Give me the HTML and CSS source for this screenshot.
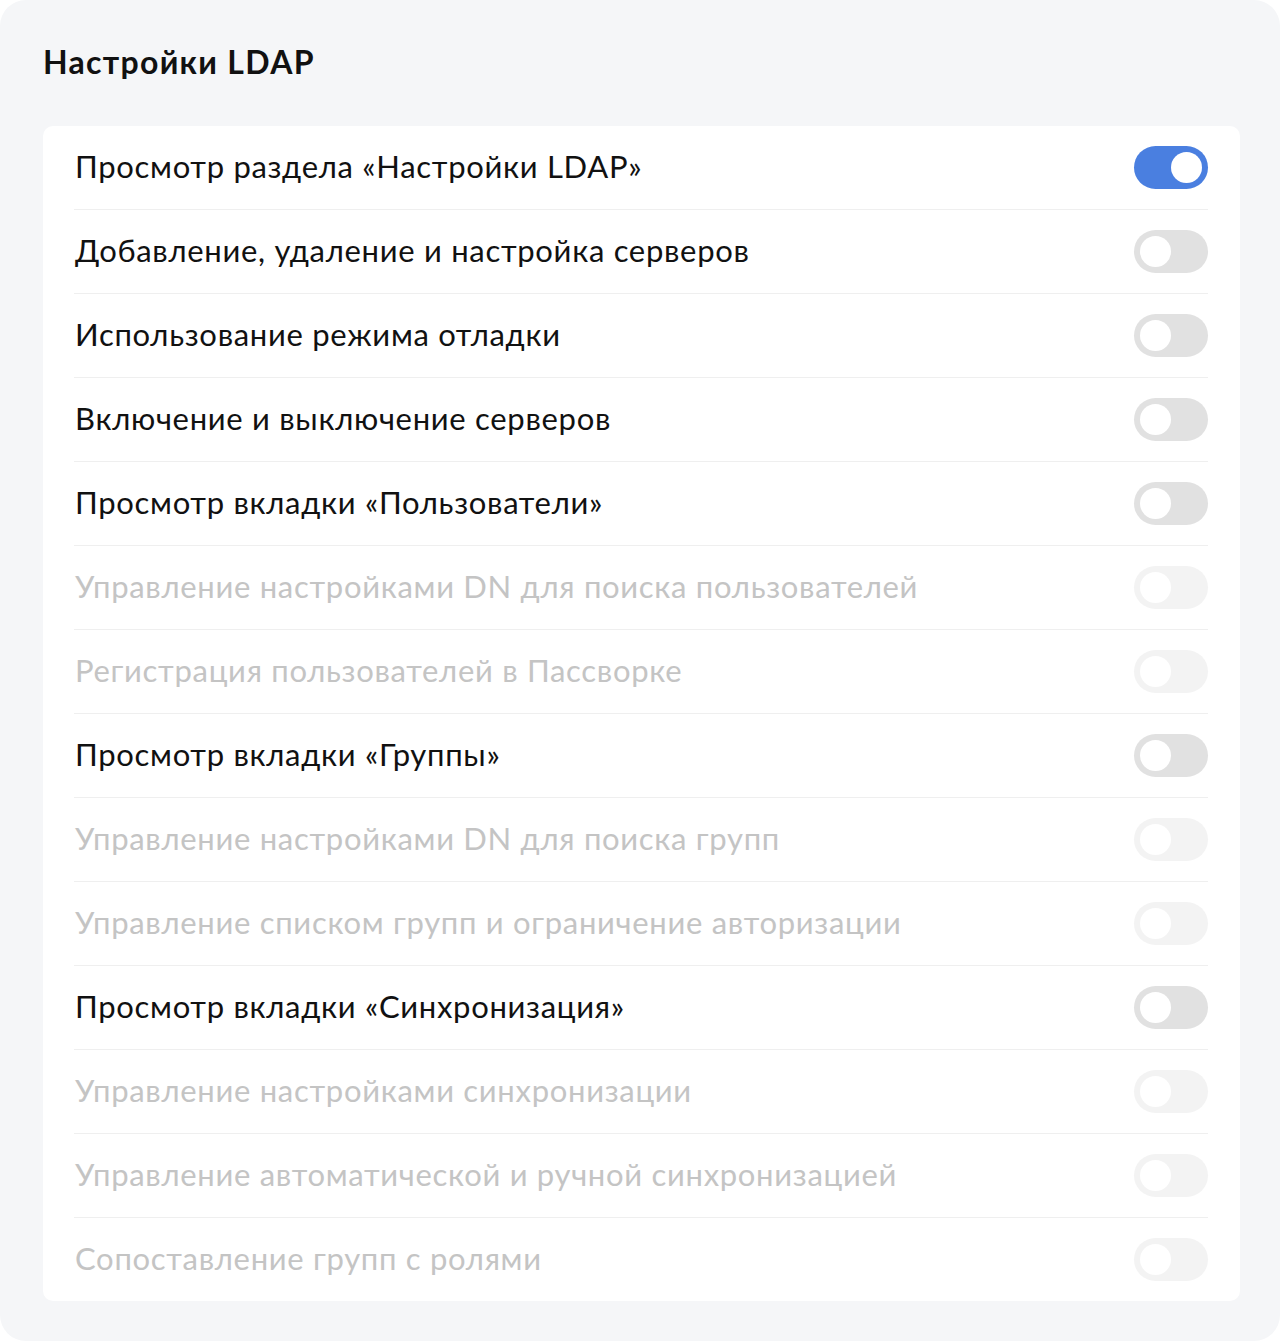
FILE: index.html
```html
<!DOCTYPE html>
<html lang="ru">
<head>
  <meta charset="UTF-8" />
  <meta name="viewport" content="width=device-width, initial-scale=1.0"/>
  <title>Настройки LDAP</title>
  <link rel="stylesheet" href="styles.css">
</head>
<body>

  <div class="panel">
    <h1>Настройки LDAP</h1>

    <div class="card">
      <div class="row">
        <span class="label">Просмотр раздела «Настройки LDAP»</span>
        <span class="toggle on"></span>
      </div>
      <div class="row">
        <span class="label">Добавление, удаление и настройка серверов</span>
        <span class="toggle"></span>
      </div>
      <div class="row">
        <span class="label">Использование режима отладки</span>
        <span class="toggle"></span>
      </div>
      <div class="row">
        <span class="label">Включение и выключение серверов</span>
        <span class="toggle"></span>
      </div>
      <div class="row">
        <span class="label">Просмотр вкладки «Пользователи»</span>
        <span class="toggle"></span>
      </div>
      <div class="row disabled">
        <span class="label">Управление настройками DN для поиска пользователей</span>
        <span class="toggle"></span>
      </div>
      <div class="row disabled">
        <span class="label">Регистрация пользователей в Пассворке</span>
        <span class="toggle"></span>
      </div>
      <div class="row">
        <span class="label">Просмотр вкладки «Группы»</span>
        <span class="toggle"></span>
      </div>
      <div class="row disabled">
        <span class="label">Управление настройками DN для поиска групп</span>
        <span class="toggle"></span>
      </div>
      <div class="row disabled">
        <span class="label">Управление списком групп и ограничение авторизации</span>
        <span class="toggle"></span>
      </div>
      <div class="row">
        <span class="label">Просмотр вкладки «Синхронизация»</span>
        <span class="toggle"></span>
      </div>
      <div class="row disabled">
        <span class="label">Управление настройками синхронизации</span>
        <span class="toggle"></span>
      </div>
      <div class="row disabled">
        <span class="label">Управление автоматической и ручной синхронизацией</span>
        <span class="toggle"></span>
      </div>
      <div class="row disabled">
        <span class="label">Сопоставление групп с ролями</span>
        <span class="toggle"></span>
      </div>
    </div>
  </div>

</body>
</html>
```

FILE: styles.css
```css
body {
  margin: 0;
  font-family: Lato, 'Noto Sans', sans-serif;
  background: white;
}

.panel {
  background: #f5f6f8;
  border-radius: 26px;
  height: 1341px;
  box-sizing: border-box;
  padding: 38px 40px 0 43px;
}

.panel h1 {
  margin: 0 0 40px;
  font-size: 32px;
  font-weight: 700;
  letter-spacing: 1.3px;
  color: #111;
  line-height: 48px;
}

.card {
  background: white;
  border-radius: 10px;
  padding: 0 32px 0 31px;
}

.row {
  display: flex;
  align-items: center;
  justify-content: space-between;
  height: 84px;
  border-bottom: 1px solid #efefef;
  box-sizing: border-box;
}

.row:last-child {
  border-bottom: none;
  height: 83px;
}

.label {
  font-size: 31px;
  letter-spacing: 0.7px;
  color: #111;
  padding: 0 0 4px 1px;
}

.toggle {
  position: relative;
  width: 74px;
  height: 43px;
  border-radius: 22px;
  background: #e1e1e1;
  flex-shrink: 0;
}

.toggle::after {
  content: "";
  position: absolute;
  top: 6px;
  left: 6px;
  width: 31px;
  height: 31px;
  border-radius: 50%;
  background: white;
}

.toggle.on {
  background: #4a7fe0;
}

.toggle.on::after {
  left: auto;
  right: 6px;
}

.disabled .label {
  color: #c4c4c4;
}

.disabled .toggle {
  background: #f3f3f3;
}
```
